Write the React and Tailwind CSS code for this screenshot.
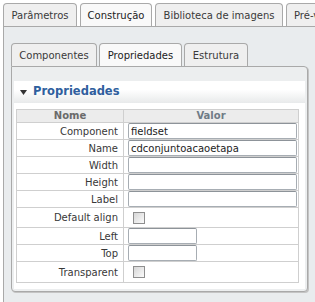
export default function App() {
  const rows = [
    { label: 'Component', type: 'text', value: 'fieldset' },
    { label: 'Name', type: 'text', value: 'cdconjuntoacaoetapa' },
    { label: 'Width', type: 'text' },
    { label: 'Height', type: 'text' },
    { label: 'Label', type: 'text' },
    { label: 'Default align', type: 'check' },
    { label: 'Left', type: 'short' },
    { label: 'Top', type: 'short' },
    { label: 'Transparent', type: 'check' },
  ];
  const tabBase =
    'shrink-0 h-[23px] flex items-center justify-center border border-b-0 border-[#a9a9a9] rounded-t-[4px] whitespace-nowrap overflow-hidden';
  return (
    <div className="w-[315px] h-[302px] overflow-hidden bg-white pl-[3px] pt-[3px] text-[10px] text-[#383838] font-['DejaVu_Sans',sans-serif]">
      <div className="w-[313px]">
        <div className="flex gap-[3px] overflow-hidden">
          <div className={tabBase + ' w-[74px] bg-[#efefef] text-[#3a3a3a]'}>Parâmetros</div>
          <div className={tabBase + ' w-[72px] bg-[#f9f9f9] text-[#222]'}>Construção</div>
          <div className={tabBase + ' w-[128px] bg-[#efefef] text-[#3a3a3a]'}>Biblioteca de imagens</div>
          <div className={tabBase + ' w-[80px] bg-[#efefef] text-[#3a3a3a] justify-start pl-[7px]'}>Pré-visualização</div>
        </div>
        <div className="border border-[#a9a9a9] bg-[#e9ecee] pt-[16px] px-[7px] h-[300px]">
          <div className="flex gap-[2px]">
            <div className={tabBase + ' w-[86px] bg-[#efefef] text-[#3a3a3a]'}>Componentes</div>
            <div className={tabBase + ' w-[83px] bg-[#f9f9f9] text-[#222]'}>Propriedades</div>
            <div className={tabBase + ' w-[64px] bg-[#efefef] text-[#3a3a3a]'}>Estrutura</div>
          </div>
          <div className="w-[297px] border border-[#a9a9a9] rounded-tr-[4px] rounded-b-[4px] bg-[#eceeef] pt-[14px] px-[2px] pb-[2px] shadow-[1px_1px_0_#c4c4c4]">
            <div className="bg-white">
              <div className="h-[22px] flex items-center gap-[6px] pl-[6px] bg-gradient-to-b from-white from-40% to-[#e8eaeb]">
                <svg width="7" height="5" viewBox="0 0 7 5"><path d="M0 0h7L3.5 5z" fill="#333" /></svg>
                <span className="text-[11.5px] font-bold text-[#2f5f9e]">Propriedades</span>
              </div>
              <div className="pt-[6px] pl-[2px] pr-[5px] pb-[6px] bg-white">
                <div className="border border-[#cfcfcf] w-[283px]">
                  <div className="flex h-[13px] bg-[#ececec] border-b border-[#cfcfcf] font-bold text-[#6a6a6a] leading-[12px]">
                    <div className="w-[107px] border-r border-[#cfcfcf] text-center">Nome</div>
                    <div className="flex-1 text-center text-[#6f7b86]">Valor</div>
                  </div>
                  {rows.map((r, i) => (
                    <div
                      key={r.label}
                      className={
                        'flex ' +
                        (r.type === 'check' ? 'h-[20px] ' : 'h-[17px] ') +
                        (i < rows.length - 1 ? 'border-b border-[#cfcfcf]' : '')
                      }
                    >
                      <div className="w-[107px] border-r border-[#cfcfcf] flex items-center justify-end pr-[5px]">
                        {r.label}
                      </div>
                      <div className="flex-1 flex items-center pl-[4px]">
                        {r.type === 'check' ? (
                          <span className="ml-[5px] w-[12px] h-[12px] border border-[#8e8e8e] bg-gradient-to-br from-[#d6d6d6] to-[#fbfbfb]" />
                        ) : (
                          <input
                            readOnly
                            value={r.value || ''}
                            className={
                              (r.type === 'short' ? 'w-[69px] ' : 'w-[169px] ') +
                              "h-[16px] border border-[#a7adb3] border-t-[#8d9399] rounded-[2px] bg-white px-[2px] text-[10px] text-[#222] font-['DejaVu_Sans',sans-serif] outline-none"
                            }
                          />
                        )}
                      </div>
                    </div>
                  ))}
                </div>
              </div>
            </div>
          </div>
        </div>
      </div>
    </div>
  );
}
